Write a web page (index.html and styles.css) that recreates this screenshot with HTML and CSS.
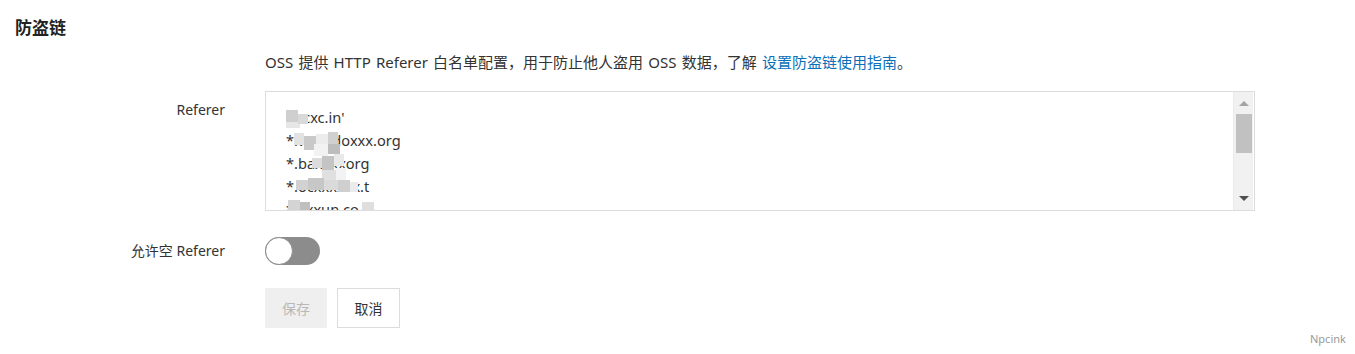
FILE: index.html
```html
<!DOCTYPE html>
<html lang="zh">
<head>
<meta charset="utf-8">
<title>防盗链</title>
<link rel="stylesheet" href="styles.css">
</head>
<body>
<div class="page">
  <h2 class="title">防盗链</h2>
  <div class="form">
    <div class="label"></div>
    <div class="desc">OSS 提供 HTTP Referer 白名单配置，用于防止他人盗用 OSS 数据，了解 <a class="link" href="#">设置防盗链使用指南</a>。</div>

    <div class="label label-top">Referer</div>
    <div class="area">
      <div class="area-text">
        <div class="line">abcxc.in'</div>
        <div class="line">*.wwwdoxxx.org</div>
        <div class="line">*.baxxxxorg</div>
        <div class="line">*.ocxxxxxx.t</div>
        <div class="line">*.xxxun.co</div>
      </div>
      <div class="mosaic">
        <i style="left:20px;top:18px;width:12px;height:12px;background:#cfcfcf"></i>
        <i style="left:20px;top:30px;width:14px;height:6px;background:#e6e6e6"></i>
        <i style="left:32px;top:22px;width:10px;height:10px;background:#d9d9d9"></i>
        <i style="left:28px;top:41px;width:10px;height:12px;background:#e2e2e2"></i>
        <i style="left:38px;top:44px;width:12px;height:14px;background:#c9c9c9"></i>
        <i style="left:50px;top:42px;width:12px;height:10px;background:#ececec"></i>
        <i style="left:62px;top:40px;width:10px;height:12px;background:#d0d0d0"></i>
        <i style="left:48px;top:52px;width:14px;height:12px;background:#f2f2f2"></i>
        <i style="left:62px;top:52px;width:12px;height:10px;background:#bdbdbd"></i>
        <i style="left:46px;top:66px;width:10px;height:10px;background:#dcdcdc"></i>
        <i style="left:56px;top:64px;width:12px;height:14px;background:#c4c4c4"></i>
        <i style="left:68px;top:62px;width:10px;height:12px;background:#e9e9e9"></i>
        <i style="left:56px;top:78px;width:14px;height:10px;background:#e0e0e0"></i>
        <i style="left:70px;top:76px;width:10px;height:12px;background:#f3f3f3"></i>
        <i style="left:30px;top:88px;width:12px;height:10px;background:#d2d2d2"></i>
        <i style="left:42px;top:86px;width:16px;height:12px;background:#c7c7c7"></i>
        <i style="left:58px;top:88px;width:14px;height:10px;background:#dadada"></i>
        <i style="left:72px;top:88px;width:12px;height:12px;background:#cfcfcf"></i>
        <i style="left:84px;top:90px;width:8px;height:10px;background:#ebebeb"></i>
        <i style="left:22px;top:108px;width:12px;height:12px;background:#d4d4d4"></i>
        <i style="left:34px;top:110px;width:10px;height:10px;background:#bfbfbf"></i>
        <i style="left:96px;top:110px;width:12px;height:10px;background:#dedede"></i>
      </div>
      <div class="scroll">
        <span class="arrow up"></span>
        <span class="thumb"></span>
        <span class="arrow down"></span>
      </div>
    </div>

    <div class="label label-mid">允许空 Referer</div>
    <div class="toggle-row"><span class="toggle"><span class="knob"></span></span></div>

    <div class="label"></div>
    <div class="buttons">
      <button class="btn btn-disabled" type="button">保存</button>
      <button class="btn" type="button">取消</button>
    </div>
  </div>
  <div class="mark">Npcink</div>
</div>
</body>
</html>
```

FILE: styles.css
```css
* { box-sizing: border-box; }
html, body { margin: 0; padding: 0; background: #fff; }
body {
  font-family: "Noto Sans", "Noto Sans CJK SC", sans-serif;
  color: #333;
  font-size: 14px;
  width: 1355px;
  height: 354px;
  overflow: hidden;
}
.page { position: relative; height: 354px; padding: 16px 0 0 15px; }
.title {
  margin: 0;
  font-size: 17px;
  font-weight: 700;
  line-height: 24px;
  color: #222;
}
.form {
  display: grid;
  grid-template-columns: 210px 990px;
  column-gap: 40px;
  margin-top: 12px;
}
.label {
  text-align: right;
  color: #333;
  font-size: 14px;
  line-height: 20px;
}
.label-top { margin-top: 9px; }
.desc {
  font-size: 15px;
  line-height: 20px;
  color: #333;
  margin-bottom: 19px;
  white-space: nowrap;
  word-spacing: 1.3px;
}
.link { color: #0b70b8; text-decoration: none; }
.area {
  position: relative;
  height: 120px;
  border: 1px solid #dcdcdc;
  overflow: hidden;
}
.area-text {
  padding: 14px 0 0 20px;
  font-size: 14.6px;
  line-height: 23px;
  color: #333;
}
.mosaic { position: absolute; left: 0; top: 0; width: 200px; height: 120px; }
.mosaic i { position: absolute; display: block; }
.scroll {
  position: absolute;
  right: 1px;
  top: 0;
  width: 20px;
  height: 118px;
  background: #f1f1f1;
  border-left: 1px solid #ebebeb;
}
.thumb {
  position: absolute;
  left: 2px;
  top: 22px;
  width: 16px;
  height: 39px;
  background: #c1c1c1;
}
.arrow {
  position: absolute;
  left: 5px;
  width: 0; height: 0;
  border-left: 5px solid transparent;
  border-right: 5px solid transparent;
}
.arrow.up { top: 9px; border-bottom: 5px solid #a3a3a3; }
.arrow.down { bottom: 9px; border-top: 5px solid #505050; }
.label-mid { margin-top: 30px; line-height: 20px; }
.toggle-row { margin-top: 26px; height: 28px; }
.toggle {
  display: block;
  position: relative;
  width: 55px;
  height: 28px;
  border-radius: 14px;
  background: #8c8c8c;
}
.knob {
  position: absolute;
  left: 0; top: 0;
  width: 28px; height: 28px;
  border-radius: 50%;
  background: #fff;
  border: 1px solid #8c8c8c;
}
.buttons { margin-top: 23px; display: flex; gap: 10px; }
.btn {
  height: 40px;
  padding: 0 15px;
  font-family: "Noto Sans CJK SC", sans-serif;
  font-size: 14px;
  color: #333;
  background: #fff;
  border: 1px solid #dcdcdc;
  border-radius: 0;
  width: 63px;
}
.btn-disabled {
  width: 62px;
  background: #efefef;
  border-color: #efefef;
  color: #b8b8b8;
}
.mark {
  position: absolute;
  left: 1310px;
  top: 331px;
  font-size: 11px;
  color: #999;
}
```
